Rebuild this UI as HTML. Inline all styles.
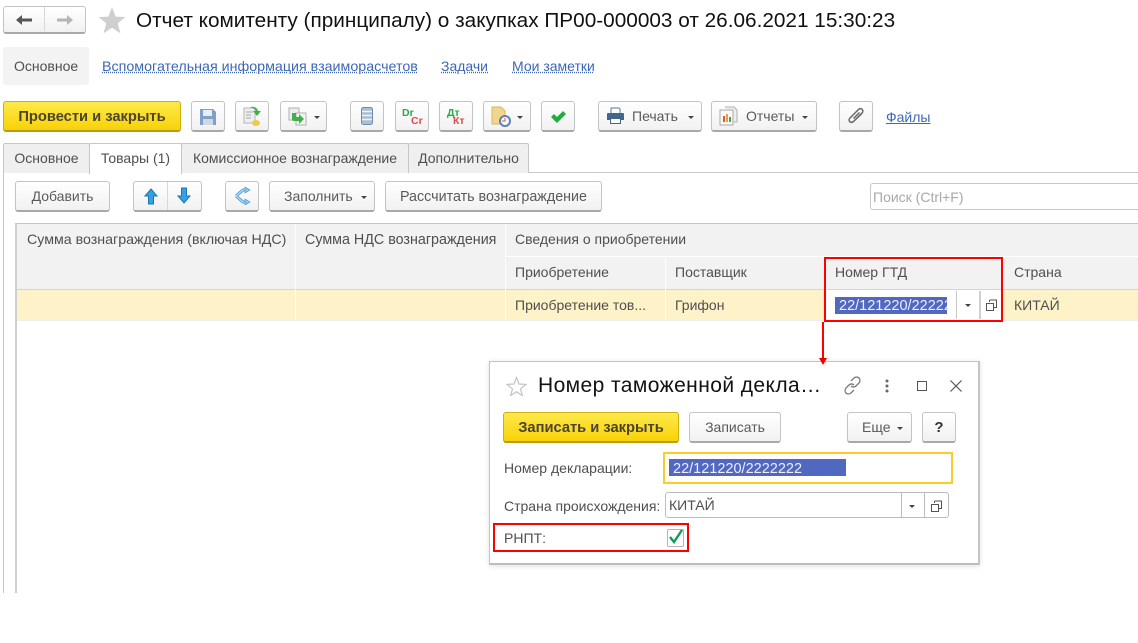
<!DOCTYPE html>
<html lang="ru"><head><meta charset="utf-8"><title>Отчет комитенту</title>
<style>
html,body{margin:0;padding:0;background:#fff}
#p{position:relative;width:1138px;height:643px;overflow:hidden;background:#fff;font-family:"Liberation Sans",sans-serif;font-size:14px;color:#4f4f4f;filter:blur(.3px)}
#p div,#p svg,#p span.a{position:absolute}
.t{white-space:nowrap;line-height:16px}
.b{box-sizing:border-box;height:31px;border:1px solid #c4c4c4;border-bottom:2px solid #a9a9a9;border-radius:3px;background:linear-gradient(#fff,#f1f1f1);text-align:center;line-height:28px;white-space:nowrap;color:#5a5a5a}
.y{background:linear-gradient(#ffe94a,#f8d208);border:1px solid #cfae12;border-bottom:2px solid #b99b10;font-weight:bold;color:#4a4430;font-size:14.7px;line-height:30px}
.tab{box-sizing:border-box;height:30px;top:143px;border:1px solid #c6c6c6;border-bottom:0;background:#efefef;text-align:center;line-height:28px;border-radius:2px 2px 0 0;white-space:nowrap}
.l{color:#3c67b8;text-decoration:underline;text-decoration-style:dotted;text-underline-offset:1px}
.h{background:#f2f2f2}
.car{width:0;height:0;border-left:3px solid transparent;border-right:3px solid transparent;border-top:3px solid #444}
.dc{font-size:10.500px;font-weight:bold;line-height:12px}
</style></head><body><div id="p">

<!-- nav -->
<div class="b" style="left:3px;top:6px;width:83px;height:28px"></div>
<div style="left:44px;top:7px;width:1px;height:24px;background:#d8d8d8"></div>
<svg style="left:15px;top:13px" width="18" height="14" viewBox="0 0 18 14"><path d="M1 7 7 2v3.500h10v3H7V12z" fill="#555"/></svg>
<svg style="left:56px;top:13px" width="18" height="14" viewBox="0 0 18 14"><path d="M17 7 11 2v3.500H1v3h10V12z" fill="#b5b5b5"/></svg>
<svg style="left:98px;top:7px" width="28" height="27" viewBox="0 0 28 27"><path d="M14 0l3.600 9.600L27.500 10l-7.800 6.300 2.700 10L14 20.700 5.600 26.300l2.700-10L.5 10l9.900-.4z" fill="#cfcfcf"/></svg>
<div class="t" id="title" style="left:136px;top:9px;font-size:20.770px;line-height:24px;color:#111">Отчет комитенту (принципалу) о закупках ПР00-000003 от 26.06.2021 15:30:23</div>

<!-- section tabs -->
<div style="left:3px;top:47px;width:86px;height:38px;background:#f3f3f3;border-radius:3px"></div>
<div class="t" style="left:14px;top:58px">Основное</div>
<div class="t l" style="left:102px;top:59px;font-size:14.280px">Вспомогательная информация взаиморасчетов</div>
<div class="t l" style="left:441px;top:58px">Задачи</div>
<div class="t l" style="left:512px;top:58px">Мои заметки</div>

<!-- toolbar -->
<div class="b y" style="left:3px;top:101px;width:178px">Провести и закрыть</div>
<div class="b" style="left:191px;top:101px;width:34px"></div>
<svg style="left:199px;top:108px" width="18" height="18" viewBox="0 0 18 18"><path d="M1 1h13l3 3v13H1z" fill="#7fa0c8"/><rect x="4" y="2" width="9" height="6" fill="#e6edf5"/><rect x="4" y="11" width="10" height="6" fill="#cfd8e3"/></svg>
<div class="b" style="left:235px;top:101px;width:34px"></div>
<svg style="left:243px;top:105px" width="20" height="22" viewBox="0 0 20 22"><path d="M1 3h11v15H1z" fill="#eee" stroke="#b5b5b5"/><path d="M3 7h7M3 10h5M3 13h5" stroke="#aaa"/><ellipse cx="13" cy="18" rx="4" ry="3" fill="#eccb4c"/><path d="M7 2c5-1 7 1 8 4h3l-4 5-4-5h3c-1-2-3-3-6-4z" fill="#3fb04a"/></svg>
<div class="b" style="left:280px;top:101px;width:47px"></div>
<svg style="left:288px;top:107px" width="20" height="19" viewBox="0 0 20 19"><path d="M1 1h10v12H1z" fill="#eee" stroke="#b0b0b0"/><path d="M8 6h10v12H8z" fill="#f5f5f5" stroke="#b0b0b0"/><path d="M4 6h4v4h3V7l5 5-5 5v-3H6a2 2 0 0 1-2-2z" fill="#3fb04a"/></svg>
<div class="car" style="left:314px;top:116px"></div>
<div class="b" style="left:350px;top:101px;width:34px"></div>
<svg style="left:361px;top:107px" width="12" height="18" viewBox="0 0 12 18"><rect x=".5" y=".5" width="11" height="17" rx="2" fill="#a9bfd3" stroke="#6f8ca8"/><path d="M1 4.500h10M1 8.500h10M1 12.500h10" stroke="#f0f4f8" stroke-width="1.400"/></svg>
<div class="b" style="left:395px;top:101px;width:34px"></div>
<div class="t dc" style="left:402px;top:107px;color:#2aa84a">Dr</div>
<div class="t dc" style="left:411px;top:115px;color:#e44848">Cr</div>
<div class="b" style="left:439px;top:101px;width:34px"></div>
<div class="t dc" style="left:447px;top:107px;color:#2aa84a">Дт</div>
<div class="t dc" style="left:453px;top:115px;color:#e44848">Кт</div>
<div class="b" style="left:483px;top:101px;width:48px"></div>
<svg style="left:491px;top:106px" width="20" height="21" viewBox="0 0 20 21"><path d="M1 1h9l4 4v13H1z" fill="#f0d68c" stroke="#d8b860"/><circle cx="14" cy="15" r="5" fill="#fff" stroke="#5a80b8" stroke-width="2"/><path d="M14 12v3h-3" stroke="#d84848" fill="none"/></svg>
<div class="car" style="left:517px;top:116px"></div>
<div class="b" style="left:541px;top:101px;width:34px"></div>
<svg style="left:550px;top:110px" width="17" height="13" viewBox="0 0 17 13"><path d="M1 7l3-3 3 3 6-6 3 3-9 9z" fill="#1fae3c"/></svg>

<div class="b" style="left:598px;top:101px;width:104px;text-align:left;padding-left:33px">Печать</div>
<svg style="left:606px;top:107px" width="19" height="18" viewBox="0 0 19 18"><path d="M5 1h8l1 1v5H5z" fill="#fff" stroke="#5b7a99"/><path d="M1 7a1 1 0 0 1 1-1h15a1 1 0 0 1 1 1v6h-3v-2H4v2H1z" fill="#41678c"/><rect x="4.500" y="11.500" width="10" height="5" fill="#fff" stroke="#41678c"/></svg>
<div class="car" style="left:688px;top:116px"></div>
<div class="b" style="left:711px;top:101px;width:106px;text-align:left;padding-left:34px">Отчеты</div>
<svg style="left:719px;top:106px" width="19" height="20" viewBox="0 0 19 20"><path d="M6 1h9l3 3v12h-3" fill="#eee" stroke="#b0b0b0"/><path d="M1 4h13v15H1z" fill="#f8f8f8" stroke="#aaa"/><path d="M4 10h2v6H4z" fill="#e5553a"/><path d="M7 8h2v8H7z" fill="#e5a23a"/><path d="M10 11h2v5h-2z" fill="#43a84c"/></svg>
<div class="car" style="left:802px;top:116px"></div>
<div class="b" style="left:839px;top:101px;width:34px"></div>
<svg style="left:847px;top:107px" width="19" height="19" viewBox="0 0 19 19"><path d="M6 15l9-9c2.500-2.500-1-6-3.500-3.500L3 11c-2.500 2.500.5 6 3.500 3.500l8-7.500M6.500 11.500l6-6" fill="none" stroke="#666" stroke-width="1.500"/></svg>
<div class="t" style="left:886px;top:109px;color:#3c67b8;text-decoration:underline">Файлы</div>

<!-- tabs -->
<div style="left:3px;top:172px;width:1135px;height:1px;background:#c8c8c8"></div>
<div class="tab" style="left:3px;width:87px">Основное</div>
<div class="tab" style="left:181px;width:228px">Комиссионное вознаграждение</div>
<div class="tab" style="left:408px;width:121px">Дополнительно</div>
<div class="tab" style="left:89px;width:93px;height:31px;background:#fff;z-index:2">Товары (1)</div>
<div style="left:3px;top:172px;width:1px;height:421px;background:#c8c8c8"></div>

<!-- toolbar 2 -->
<div class="b" style="left:15px;top:181px;width:95px">Добавить</div>
<div class="b" style="left:133px;top:181px;width:69px"></div>
<div style="left:167px;top:182px;width:1px;height:28px;background:#d8d8d8"></div>
<svg style="left:144px;top:188px" width="14" height="17" viewBox="0 0 14 17"><path d="M7 1l6 7H9.500v8h-5V8H1z" fill="#36a0e0" stroke="#1c78b5"/></svg>
<svg style="left:177px;top:187px" width="14" height="17" viewBox="0 0 14 17"><path d="M4.500 1h5v8H13l-6 7-6-7h3.500z" fill="#36a0e0" stroke="#1c78b5"/></svg>
<div class="b" style="left:225px;top:181px;width:34px"></div>
<svg style="left:233px;top:187px" width="18" height="18" viewBox="0 0 18 18"><g fill="none" stroke-linejoin="round"><path d="M3 9l7-6h3M3 9l7 6h3" stroke="#4a9bd0" stroke-width="3"/><path d="M3 9l7-6h3M3 9l7 6h3" stroke="#b4def6" stroke-width="1.300"/></g><path d="M12 0l5 3-5 3zM12 12l5 3-5 3z" fill="#8cc8ec" stroke="#4a9bd0" stroke-width=".7"/></svg>
<div class="b" style="left:269px;top:181px;width:106px;text-align:left;padding-left:14px">Заполнить</div>
<div class="car" style="left:361px;top:196px"></div>
<div class="b" style="left:385px;top:181px;width:217px;font-size:14.300px;line-height:30px">Рассчитать вознаграждение</div>
<div style="left:870px;top:183px;width:268px;height:27px;box-sizing:border-box;border:1px solid #c8c8c8;border-right:0;border-radius:3px 0 0 3px"></div>
<div class="t" style="left:873px;top:189px;color:#a8a8a8">Поиск (Ctrl+F)</div>

<!-- table -->
<div style="left:15px;top:223px;width:1123px;height:1px;background:#c4c4c4"></div>
<div style="left:15px;top:223px;width:2px;height:370px;background:#cfcfcf"></div>
<div class="h" style="left:17px;top:224px;width:1121px;height:65px"></div>
<div style="left:17px;top:289px;width:1121px;height:1px;background:#d4d4d4"></div>
<div style="left:17px;top:290px;width:1121px;height:30px;background:#fef2c8"></div>
<div style="left:17px;top:320px;width:1121px;height:1px;background:#eeeeee"></div>
<div style="left:295px;top:224px;width:1px;height:96px;background:#fff;opacity:.8"></div>
<div style="left:505px;top:224px;width:1px;height:96px;background:#fff;opacity:.8"></div>
<div style="left:506px;top:256px;width:632px;height:1px;background:#fff"></div>
<div style="left:665px;top:257px;width:1px;height:63px;background:#fff;opacity:.8"></div>
<div style="left:825px;top:258px;width:178px;height:1px;background:#fff"></div>
<div class="t" style="left:27px;top:232px;font-size:14.220px">Сумма вознаграждения (включая НДС)</div>
<div class="t" style="left:305px;top:232px;font-size:14.300px">Сумма НДС вознаграждения</div>
<div class="t" style="left:515px;top:231px">Сведения о приобретении</div>
<div class="t" style="left:515px;top:264px">Приобретение</div>
<div class="t" style="left:675px;top:264px">Поставщик</div>
<div class="t" style="left:835px;top:264px">Номер ГТД</div>
<div class="t" style="left:1014px;top:264px">Страна</div>
<div class="t" style="left:515px;top:297px">Приобретение тов...</div>
<div class="t" style="left:675px;top:297px">Грифон</div>
<div class="t" style="left:1014px;top:297px">КИТАЙ</div>

<!-- selected cell -->
<div style="left:826px;top:290px;width:176px;height:30px;background:#fff"></div>
<div style="left:835px;top:297px;width:112px;height:17px;background:#5068c0;overflow:hidden"><span class="a t" style="left:4px;top:1px;color:#eef;font-size:14.500px">22/121220/2222222</span></div>
<div style="left:956px;top:291px;width:1px;height:28px;background:#c8c8c8"></div>
<div style="left:979px;top:291px;width:2px;height:28px;background:#d0d0d0"></div>
<div class="car" style="left:965px;top:304px"></div>
<svg style="left:985px;top:299px" width="13" height="13" viewBox="0 0 13 13"><path d="M4.500 3V1.500a.5.500 0 0 1 .5-.5h6.500v7.500H9M1.500 4.500H8.500v7H1.500z" fill="none" stroke="#555"/></svg>
<div style="left:824px;top:257px;width:179px;height:65px;box-sizing:border-box;border:2px solid #f00;z-index:3"></div>
<div style="left:822px;top:322px;width:2px;height:38px;background:#f00;z-index:3"></div>
<svg style="left:819px;top:358px;z-index:6" width="8" height="7" viewBox="0 0 8 7"><path d="M0 0h8L4 7z" fill="#e00"/></svg>

<!-- dialog -->
<div style="left:489px;top:361px;width:491px;height:204px;box-sizing:border-box;background:#fff;border:1px solid #c4c4c4;border-bottom:2px solid #bdbdbd;border-right:2px solid #c4c4c4;box-shadow:0 1px 5px rgba(0,0,0,.12);z-index:4">
</div>
<div style="left:0;top:0;width:1138px;height:643px;z-index:5">
<svg style="left:506px;top:376px" width="21" height="20" viewBox="0 0 21 20"><path d="M10.500 1.500l2.500 6.500 7 .4-5.500 4.400 1.900 6.800-5.900-3.900-5.900 3.900 1.900-6.800L1 8.400 8 8z" fill="#fff" stroke="#c4c4c4" stroke-width="1.200"/></svg>
<div class="t" style="left:538px;top:374px;font-size:21px;line-height:24px;color:#111;letter-spacing:.42px">Номер таможенной декла…</div>
<svg style="left:843px;top:376px" width="19" height="19" viewBox="0 0 19 19"><path d="M8 5l3-3c2-1.500 4-1 5 0s1.500 3 0 5l-3 3a3.500 3.500 0 0 1-5 0M11 14l-3 3c-2 1.500-4 1-5 0s-1.500-3 0-5l3-3a3.500 3.500 0 0 1 5 0" fill="none" stroke="#777" stroke-width="1.300"/></svg>
<svg style="left:885px;top:379px" width="4" height="14" viewBox="0 0 4 14"><circle cx="2" cy="2" r="1.500" fill="#666"/><circle cx="2" cy="7" r="1.500" fill="#666"/><circle cx="2" cy="12" r="1.500" fill="#666"/></svg>
<div style="left:917px;top:381px;width:10px;height:10px;box-sizing:border-box;border:1px solid #555"></div>
<svg style="left:950px;top:380px" width="12" height="12" viewBox="0 0 12 12"><path d="M.5.500l11 11M11.500.500l-11 11" stroke="#555" stroke-width="1.200"/></svg>

<div class="b y" style="left:503px;top:412px;width:176px">Записать и закрыть</div>
<div class="b" style="left:689px;top:412px;width:92px">Записать</div>
<div class="b" style="left:847px;top:412px;width:65px;text-align:left;padding-left:14px">Еще</div>
<div class="car" style="left:897px;top:427px"></div>
<div class="b" style="left:922px;top:412px;width:34px;font-weight:bold;color:#333;font-size:15px;line-height:30px">?</div>

<div class="t" style="left:504px;top:460px">Номер декларации:</div>
<div style="left:663px;top:452px;width:290px;height:32px;box-sizing:border-box;border:2px solid #fbcb2c"></div>
<div style="left:669px;top:459px;width:177px;height:17px;background:#5068c0"><span class="a t" style="left:4px;top:2px;color:#eef;font-size:14.500px">22/121220/2222222</span></div>

<div class="t" style="left:504px;top:498px">Страна происхождения:</div>
<div style="left:665px;top:492px;width:284px;height:26px;box-sizing:border-box;border:1px solid #bcbcbc;border-radius:3px"></div>
<div class="t" style="left:669px;top:497px">КИТАЙ</div>
<div style="left:901px;top:493px;width:1px;height:24px;background:#bcbcbc"></div>
<div style="left:924px;top:493px;width:1px;height:24px;background:#bcbcbc"></div>
<div class="car" style="left:909px;top:505px"></div>
<svg style="left:930px;top:500px" width="13" height="13" viewBox="0 0 13 13"><path d="M4.500 3V1.500a.5.500 0 0 1 .5-.5h6.500v7.500H9M1.500 4.500H8.500v7H1.500z" fill="none" stroke="#555"/></svg>

<div class="t" style="left:504px;top:530px">РНПТ:</div>
<div style="left:667px;top:529px;width:17px;height:18px;box-sizing:border-box;border:1px solid #b4b4b4;border-radius:2px"></div>
<svg style="left:668px;top:528px" width="16" height="17" viewBox="0 0 16 17"><path d="M2 9l4 5 8-12" fill="none" stroke="#119a5a" stroke-width="2.400"/></svg>
<div style="left:493px;top:523px;width:196px;height:29px;box-sizing:border-box;border:2px solid #f00"></div>
</div>
</div></body></html>
